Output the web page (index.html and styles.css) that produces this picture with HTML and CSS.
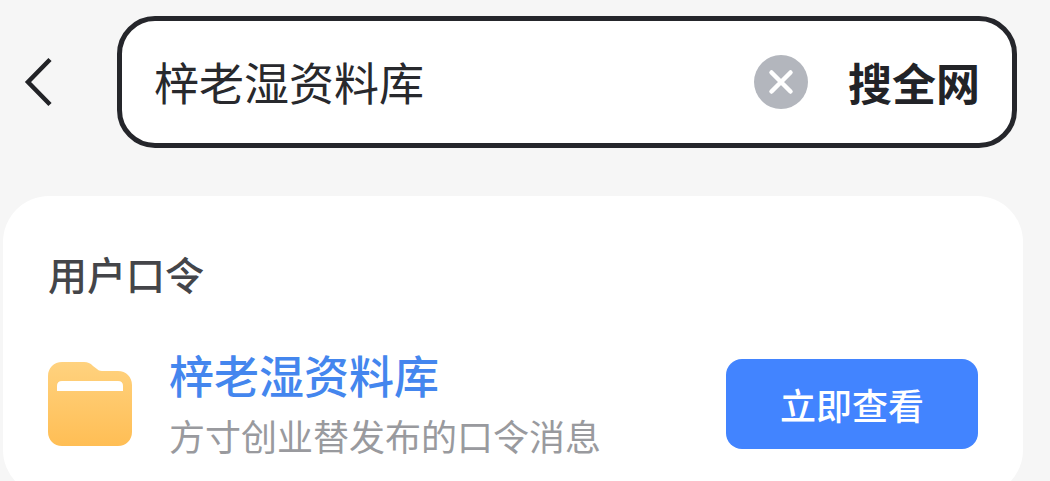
FILE: index.html
```html
<!DOCTYPE html>
<html lang="zh-CN">

<head>
    <meta charset="UTF-8">
    <meta name="viewport" content="width=device-width, initial-scale=1.0">
    <title>搜索</title>
    <link rel="stylesheet" href="styles.css">
</head>

<body>
    <div class="container">
        <header>
            <svg class="back" viewBox="0 0 30 52">
                <path d="M26 3.5 4 26l22 22.500" />
            </svg>
            <div class="search">
                <p class="keyword">梓老湿资料库</p>
                <svg class="clear" viewBox="0 0 54 54">
                    <circle cx="27" cy="27" r="27" />
                    <path d="M17.500 17.500l19 19M36.500 17.500l-19 19" />
                </svg>
                <p class="all">搜全网</p>
            </div>
        </header>
        <main>
            <h2>用户口令</h2>
            <div class="item">
                <svg class="folder" viewBox="0 0 84 84">
                    <defs>
                        <linearGradient id="fill" x1="0" y1="0" x2="0" y2="1">
                            <stop offset="0" stop-color="#ffd27f" />
                            <stop offset="1" stop-color="#ffbe55" />
                        </linearGradient>
                    </defs>
                    <path fill="url(#fill)" d="M14 0h22c4 0 6 1 9 4l4 3c2 2 4 2 7 2h14c8 0 14 6 14 14v47c0 8-6 14-14 14H14C6 84 0 78 0 70V14C0 6 6 0 14 0z" />
                    <path fill="#fff" d="M14 19h56q5 0 5 5v5H9v-5q0-5 5-5z" />
                </svg>
                <div class="info">
                    <p class="name">梓老湿资料库</p>
                    <p class="desc">方寸创业替发布的口令消息</p>
                </div>
                <button class="btn">立即查看</button>
            </div>
        </main>
    </div>
</body>

</html>
```
FILE: styles.css
```css
* {
    margin: 0;
    padding: 0;
    box-sizing: border-box;
}

body {
    height: 481px;
    overflow: hidden;
    background: #f6f6f6;
    font-family: "Noto Sans CJK SC", sans-serif;
}

.container {
    padding: 16px 0 0 3px;
}

header {
    display: flex;
    align-items: center;
}

.back {
    width: 30px;
    height: 52px;
    margin: 0 63px 0 21px;
    fill: none;
    stroke: #222327;
    stroke-width: 4.5;
}

.search {
    width: 900px;
    height: 132px;
    padding: 0 32px;
    display: flex;
    align-items: center;
    border: 5px solid #25262b;
    border-radius: 38px;
    background: #fff;
}

.keyword {
    flex: 1;
    font-size: 45px;
    line-height: 60px;
    color: #28292d;
}

.clear {
    width: 54px;
    height: 54px;
    margin-right: 40px;
    fill: #b3b6bd;
}

.clear path {
    stroke: #fff;
    stroke-width: 4.5;
    stroke-linecap: round;
}

.all {
    font-size: 44px;
    line-height: 60px;
    font-weight: 700;
    color: #222327;
}

main {
    width: 1020px;
    height: 300px;
    margin-top: 48px;
    padding: 48px 45px 0;
    border-radius: 46px;
    background: #fff;
}

h2 {
    font-size: 39px;
    line-height: 58px;
    font-weight: 500;
    color: #444549;
}

.item {
    display: flex;
    align-items: center;
    margin-top: 42px;
}

.folder {
    width: 84px;
    height: 84px;
}

.info {
    flex: 1;
    margin-left: 37px;
}

.name {
    font-size: 45px;
    line-height: 62px;
    font-weight: 500;
    color: #4486ee;
}

.desc {
    font-size: 36px;
    line-height: 58px;
    color: #999a9e;
}

.btn {
    width: 252px;
    height: 90px;
    border: 0;
    border-radius: 16px;
    background: #4284ff;
    font-family: inherit;
    font-size: 36px;
    font-weight: 500;
    color: #fff;
}
```
